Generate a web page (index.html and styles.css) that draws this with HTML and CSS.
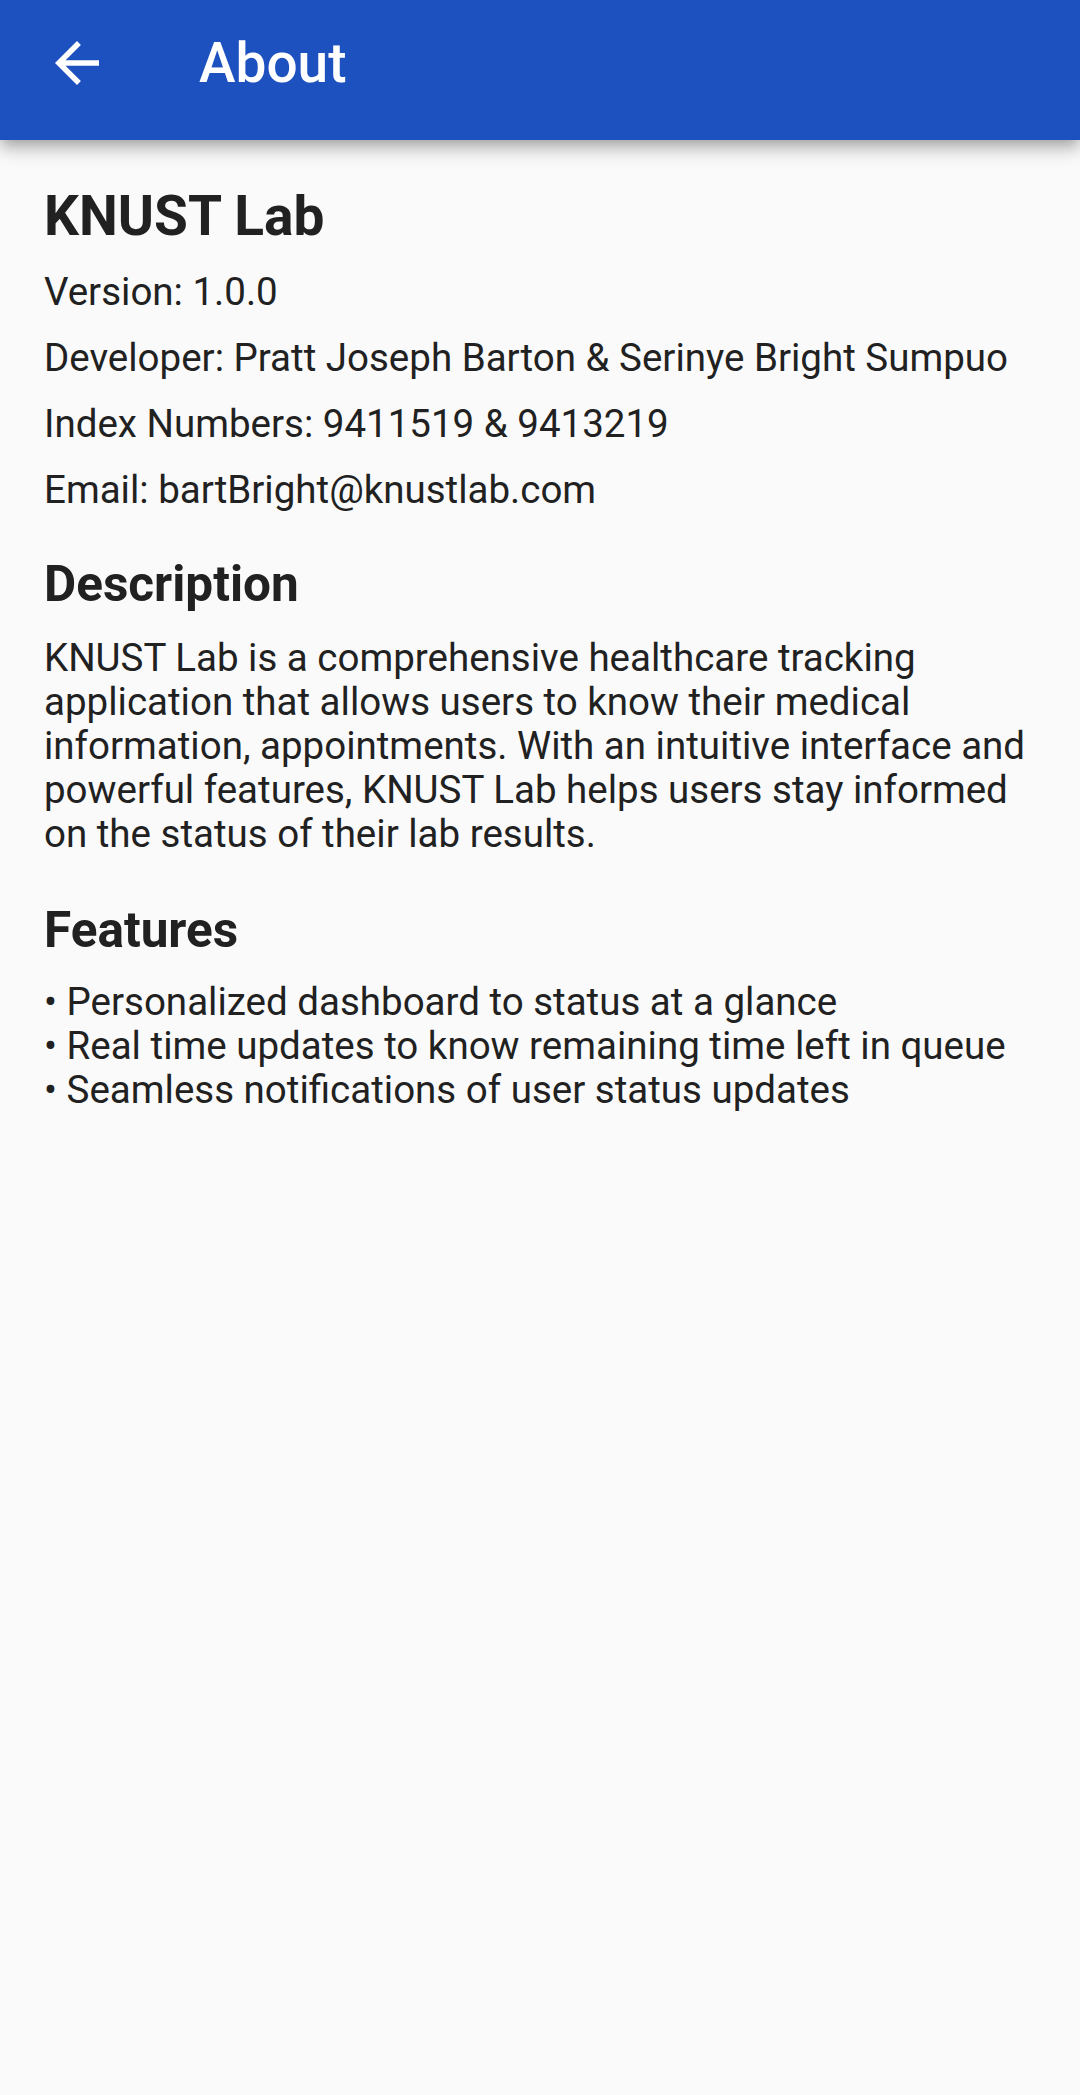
FILE: index.html
```html
<!DOCTYPE html>
<html lang="en">
<head>
<meta charset="utf-8">
<title>About</title>
<link rel="stylesheet" href="styles.css">
</head>
<body>
<header class="appbar">
  <button class="back" aria-label="Back">
    <svg viewBox="0 0 24 24" width="66" height="66"><path fill="#fff" d="M20 11H7.83l5.59-5.59L12 4l-8 8 8 8 1.41-1.41L7.83 13H20v-2z"/></svg>
  </button>
  <h1 class="appbar-title">About</h1>
</header>
<main class="content">
  <h2 class="app-name">KNUST Lab</h2>
  <div class="info">
    <p class="info-row">Version: 1.0.0</p>
    <p class="info-row">Developer: Pratt Joseph Barton &amp; Serinye Bright Sumpuo</p>
    <p class="info-row">Index Numbers: 9411519 &amp; 9413219</p>
    <p class="info-row">Email: bartBright@knustlab.com</p>
  </div>
  <h3 class="section-title desc-title">Description</h3>
  <p class="para desc-text">KNUST Lab is a comprehensive healthcare tracking application that allows users to know their medical information, appointments. With an intuitive interface and powerful features, KNUST Lab helps users stay informed on the status of their lab results.</p>
  <h3 class="section-title feat-title">Features</h3>
  <p class="para feat-text">• Personalized dashboard to status at a glance<br>• Real time updates to know remaining time left in queue<br>• Seamless notifications of user status updates</p>
</main>
</body>
</html>
```
FILE: styles.css
```css
html, body {
  margin: 0;
  padding: 0;
}
body {
  background: #fafafa;
  font-family: Roboto, "Noto Sans", "Liberation Sans", sans-serif;
  color: #212121;
  min-height: 2095px;
}
.appbar {
  height: 140px;
  background: #1e51c0;
  display: flex;
  align-items: flex-start;
  box-shadow: 0 5px 11px -3px rgba(0,0,0,0.2), 0 11px 14px rgba(0,0,0,0.14), 0 3px 28px rgba(0,0,0,0.12);
  position: relative;
  z-index: 1;
}
.back {
  margin: 30px 0 0 44px;
  width: 66px;
  height: 66px;
  padding: 0;
  border: 0;
  background: none;
  display: flex;
}
.appbar-title {
  margin: 27px 0 0 89px;
  font-size: 55px;
  font-weight: 500;
  line-height: 72px;
  color: #fff;
}
.content {
  padding: 44px 44px 0 44px;
}
.app-name {
  margin: 0 0 11px 0;
  font-size: 55px;
  font-weight: 700;
  line-height: 64px;
}
.info-row {
  margin: 0;
  padding: 11px 0;
  font-size: 38.5px;
  line-height: 44px;
}
.section-title {
  margin: 0;
  font-size: 49.5px;
  font-weight: 700;
  line-height: 58px;
}
.desc-title {
  margin-top: 32px;
}
.feat-title {
  margin-top: 45px;
}
.para {
  margin: 0;
  font-size: 38.5px;
  line-height: 44px;
}
.desc-text {
  margin-top: 23px;
}
.feat-text {
  margin-top: 21px;
}
```
